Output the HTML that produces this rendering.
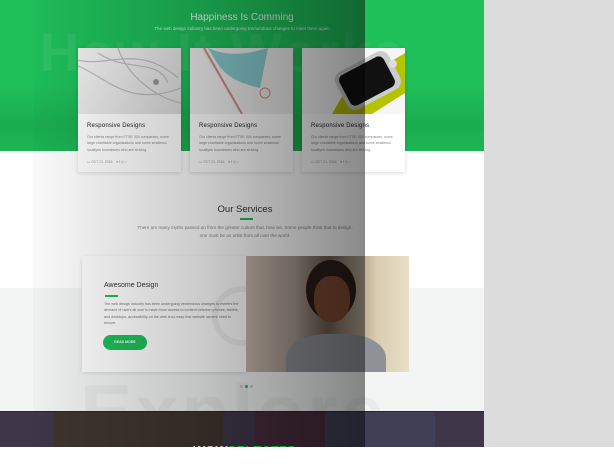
<!DOCTYPE html>
<html><head><meta charset="utf-8"><style>
*{margin:0;padding:0;box-sizing:border-box}
body{width:614px;height:472px;overflow:hidden;background:#fff;font-family:"Liberation Sans",sans-serif;position:relative}
.abs{position:absolute}
.green{left:0;top:0;width:484px;height:151px;background:#1fbf5a}
.water{left:0;top:85px;width:484px;height:66px;background:linear-gradient(180deg,rgba(0,60,20,0) 0%,rgba(0,70,25,.15) 60%,rgba(0,60,20,.08) 100%)}
.right{left:484px;top:0;width:130px;height:447px;background:#dcdcdc}
.card{width:103px;height:124px;top:48px;background:#fff;box-shadow:0 1px 4px rgba(0,0,0,.15)}
.card .img{height:66px;background:#f2f2f2;position:relative;overflow:hidden}
.card h4{font-size:6px;font-weight:normal;color:#222;margin:9px 0 0 9px;letter-spacing:.2px}
.card p{font-size:3.6px;color:#888;margin:5px 9px 0 9px;line-height:6.3px}
.card .meta{font-size:3.4px;color:#999;margin:7px 0 0 9px}
.band{left:0;top:288px;width:484px;height:123px;background:#f3f5f4}
.dark{left:0;top:411px;width:484px;height:36px;background:#4a4256;border-top:1px solid #2a2530}
.overlay{left:33px;top:0;width:332px;height:447px;background:linear-gradient(90deg,rgba(0,0,0,.02),rgba(0,0,0,.2) 50%,rgba(0,0,0,.46))}
</style></head><body>
<div class="abs green"></div>
<div class="abs water"></div>
<div class="abs" style="left:40px;top:22px;font-size:54px;font-weight:bold;color:rgba(255,255,255,.07);white-space:nowrap;letter-spacing:2px">How It Works</div>
<div class="abs" style="left:0;width:484px;top:12px;text-align:center;font-size:10px;color:#e8f7ec">Happiness Is Comming</div>
<div class="abs" style="left:0;width:484px;top:26px;text-align:center;font-size:4.5px;color:#e0f2e6">The web design industry has been undergoing tremendous changes to meet them again</div>

<div class="abs card" style="left:78px"><div class="img" style="background:linear-gradient(135deg,#f4f4f4,#dcdcdc)">
<svg width="103" height="66" class="abs" style="left:0;top:0"><path d="M0 12 C30 20 60 -5 100 30 M0 18 C30 30 50 60 103 40 M20 5 C50 25 80 10 90 35 M40 0 C50 30 80 50 103 55" stroke="#bbb" stroke-width="1.2" fill="none"/><circle cx="78" cy="34" r="3" fill="#999"/></svg></div>
<h4>Responsive Designs</h4><p>Our clients range from FTSE 300 companies, some large charitable organisations and some smalleslu localtyes businesses who are striving.</p><div class="meta">▭ OCT 21, 2016, &nbsp; ♥ f ◎ ≈</div></div>
<div class="abs card" style="left:190px"><div class="img" style="background:#f0f0f0">
<svg width="103" height="66" class="abs" style="left:0;top:0"><path d="M10 0 L50 66 L103 66 L103 0Z" fill="#ececec"/><path d="M14 0 L52 66" stroke="#c98e7e" stroke-width="2"/><path d="M18 0 C40 10 60 5 78 0 L70 40 C50 35 35 30 24 10Z" fill="#6fc3c8" opacity=".8"/><circle cx="75" cy="45" r="5" fill="none" stroke="#c98e7e"/></svg></div>
<h4>Responsive Designs</h4><p>Our clients range from FTSE 300 companies, some large charitable organisations and some smalleslu localtyes businesses who are striving.</p><div class="meta">▭ OCT 21, 2016, &nbsp; ♥ f ◎ ≈</div></div>
<div class="abs card" style="left:302px"><div class="img" style="background:#f6f6f6">
<svg width="103" height="66" class="abs" style="left:0;top:0"><path d="M30 66 L45 40 L103 5 L103 45 L70 66Z" fill="#b5c400"/><g transform="rotate(-28 65 33)"><rect x="36" y="12" width="60" height="42" rx="9" fill="#ccc"/><rect x="40" y="16" width="50" height="34" rx="6" fill="#111"/><circle cx="96" cy="30" r="4" fill="#ddd"/></g></svg></div>
<h4>Responsive Designs</h4><p>Our clients range from FTSE 300 companies, some large charitable organisations and some smalleslu localtyes businesses who are striving.</p><div class="meta">▭ OCT 21, 2016, &nbsp; ♥ f ◎ ≈</div></div>

<div class="abs band"></div>
<div class="abs" style="left:80px;top:368px;font-size:78px;font-weight:bold;color:rgba(0,0,0,.035);white-space:nowrap;height:43px;overflow:hidden;line-height:88px;letter-spacing:3px">Explore</div>
<div class="abs" style="left:0;width:490px;top:204px;text-align:center;font-size:9.5px;color:#333">Our Services</div>
<div class="abs" style="left:240px;top:218px;width:13px;height:1.5px;background:#1fbf5a"></div>
<div class="abs" style="left:0;width:490px;top:224px;text-align:center;font-size:4.6px;color:#888;line-height:8px">There are many myths passed on from the greater culture that. how we. Some people think that to design,<br>one must be an artist from all over the world.</div>

<div class="abs" style="left:82px;top:256px;width:164px;height:116px;background:#fff;box-shadow:0 1px 4px rgba(0,0,0,.12);overflow:hidden">
<div class="abs" style="left:130px;top:30px;width:60px;height:60px;border-radius:50%;border:6px solid rgba(0,0,0,.05)"></div>
<div class="abs" style="left:22px;top:26px;font-size:7px;color:#333">Awesome Design</div>
<div class="abs" style="left:23px;top:39px;width:13px;height:1.5px;background:#1fbf5a"></div>
<div class="abs" style="left:22px;top:45px;width:140px;font-size:3.7px;color:#777;line-height:6.4px">The web design industry has been undergoing tremendous changes to meetes the demand of users all over to have more access to content between phones, tablets, and desktops, accessibility on the web is so easy that website owners need to ensure.</div>
<div class="abs" style="left:21px;top:79px;width:44px;height:15px;border-radius:8px;background:#1fbf5a;color:#fff;font-size:3.5px;font-weight:bold;text-align:center;line-height:15px">READ MORE</div>
</div>
<div class="abs" style="left:246px;top:256px;width:163px;height:116px;background:linear-gradient(90deg,#c9b8ad 0%,#a99a90 30%,#6f5c52 50%,#d9ccb0 80%,#e8e0c8 100%);overflow:hidden">
<div class="abs" style="left:60px;top:4px;width:50px;height:60px;border-radius:50%;background:#2a1d17"></div>
<div class="abs" style="left:68px;top:20px;width:36px;height:46px;border-radius:45%;background:#7b4a32"></div>
<div class="abs" style="left:40px;top:78px;width:100px;height:60px;border-radius:40% 40% 0 0;background:#8e9296"></div>
</div>
<div class="abs" style="left:240px;top:385px;width:3px;height:3px;border-radius:50%;background:#ccc"></div>
<div class="abs" style="left:245px;top:385px;width:3px;height:3px;border-radius:50%;background:#1fbf5a"></div>
<div class="abs" style="left:250px;top:385px;width:3px;height:3px;border-radius:50%;background:#ccc"></div>

<div class="abs dark"></div>
<div class="abs" style="left:53px;top:412px;width:170px;height:35px;background:#4a4230"></div>
<div class="abs" style="left:255px;top:412px;width:70px;height:35px;background:#553540"></div>
<div class="abs" style="left:325px;top:412px;width:110px;height:35px;background:#4b4e66"></div>
<div class="abs" style="left:0;top:412px;width:484px;height:35px;background:rgba(30,20,40,.25)"></div>
<div class="abs" style="left:0;width:490px;top:444px;height:3px;overflow:hidden;text-align:center;font-size:13px;font-weight:bold;line-height:14px;color:#fff">WOW<span style="color:#2ee06a">SELECTED</span></div>

<div class="abs overlay"></div>
<div class="abs right"></div>
</body></html>
